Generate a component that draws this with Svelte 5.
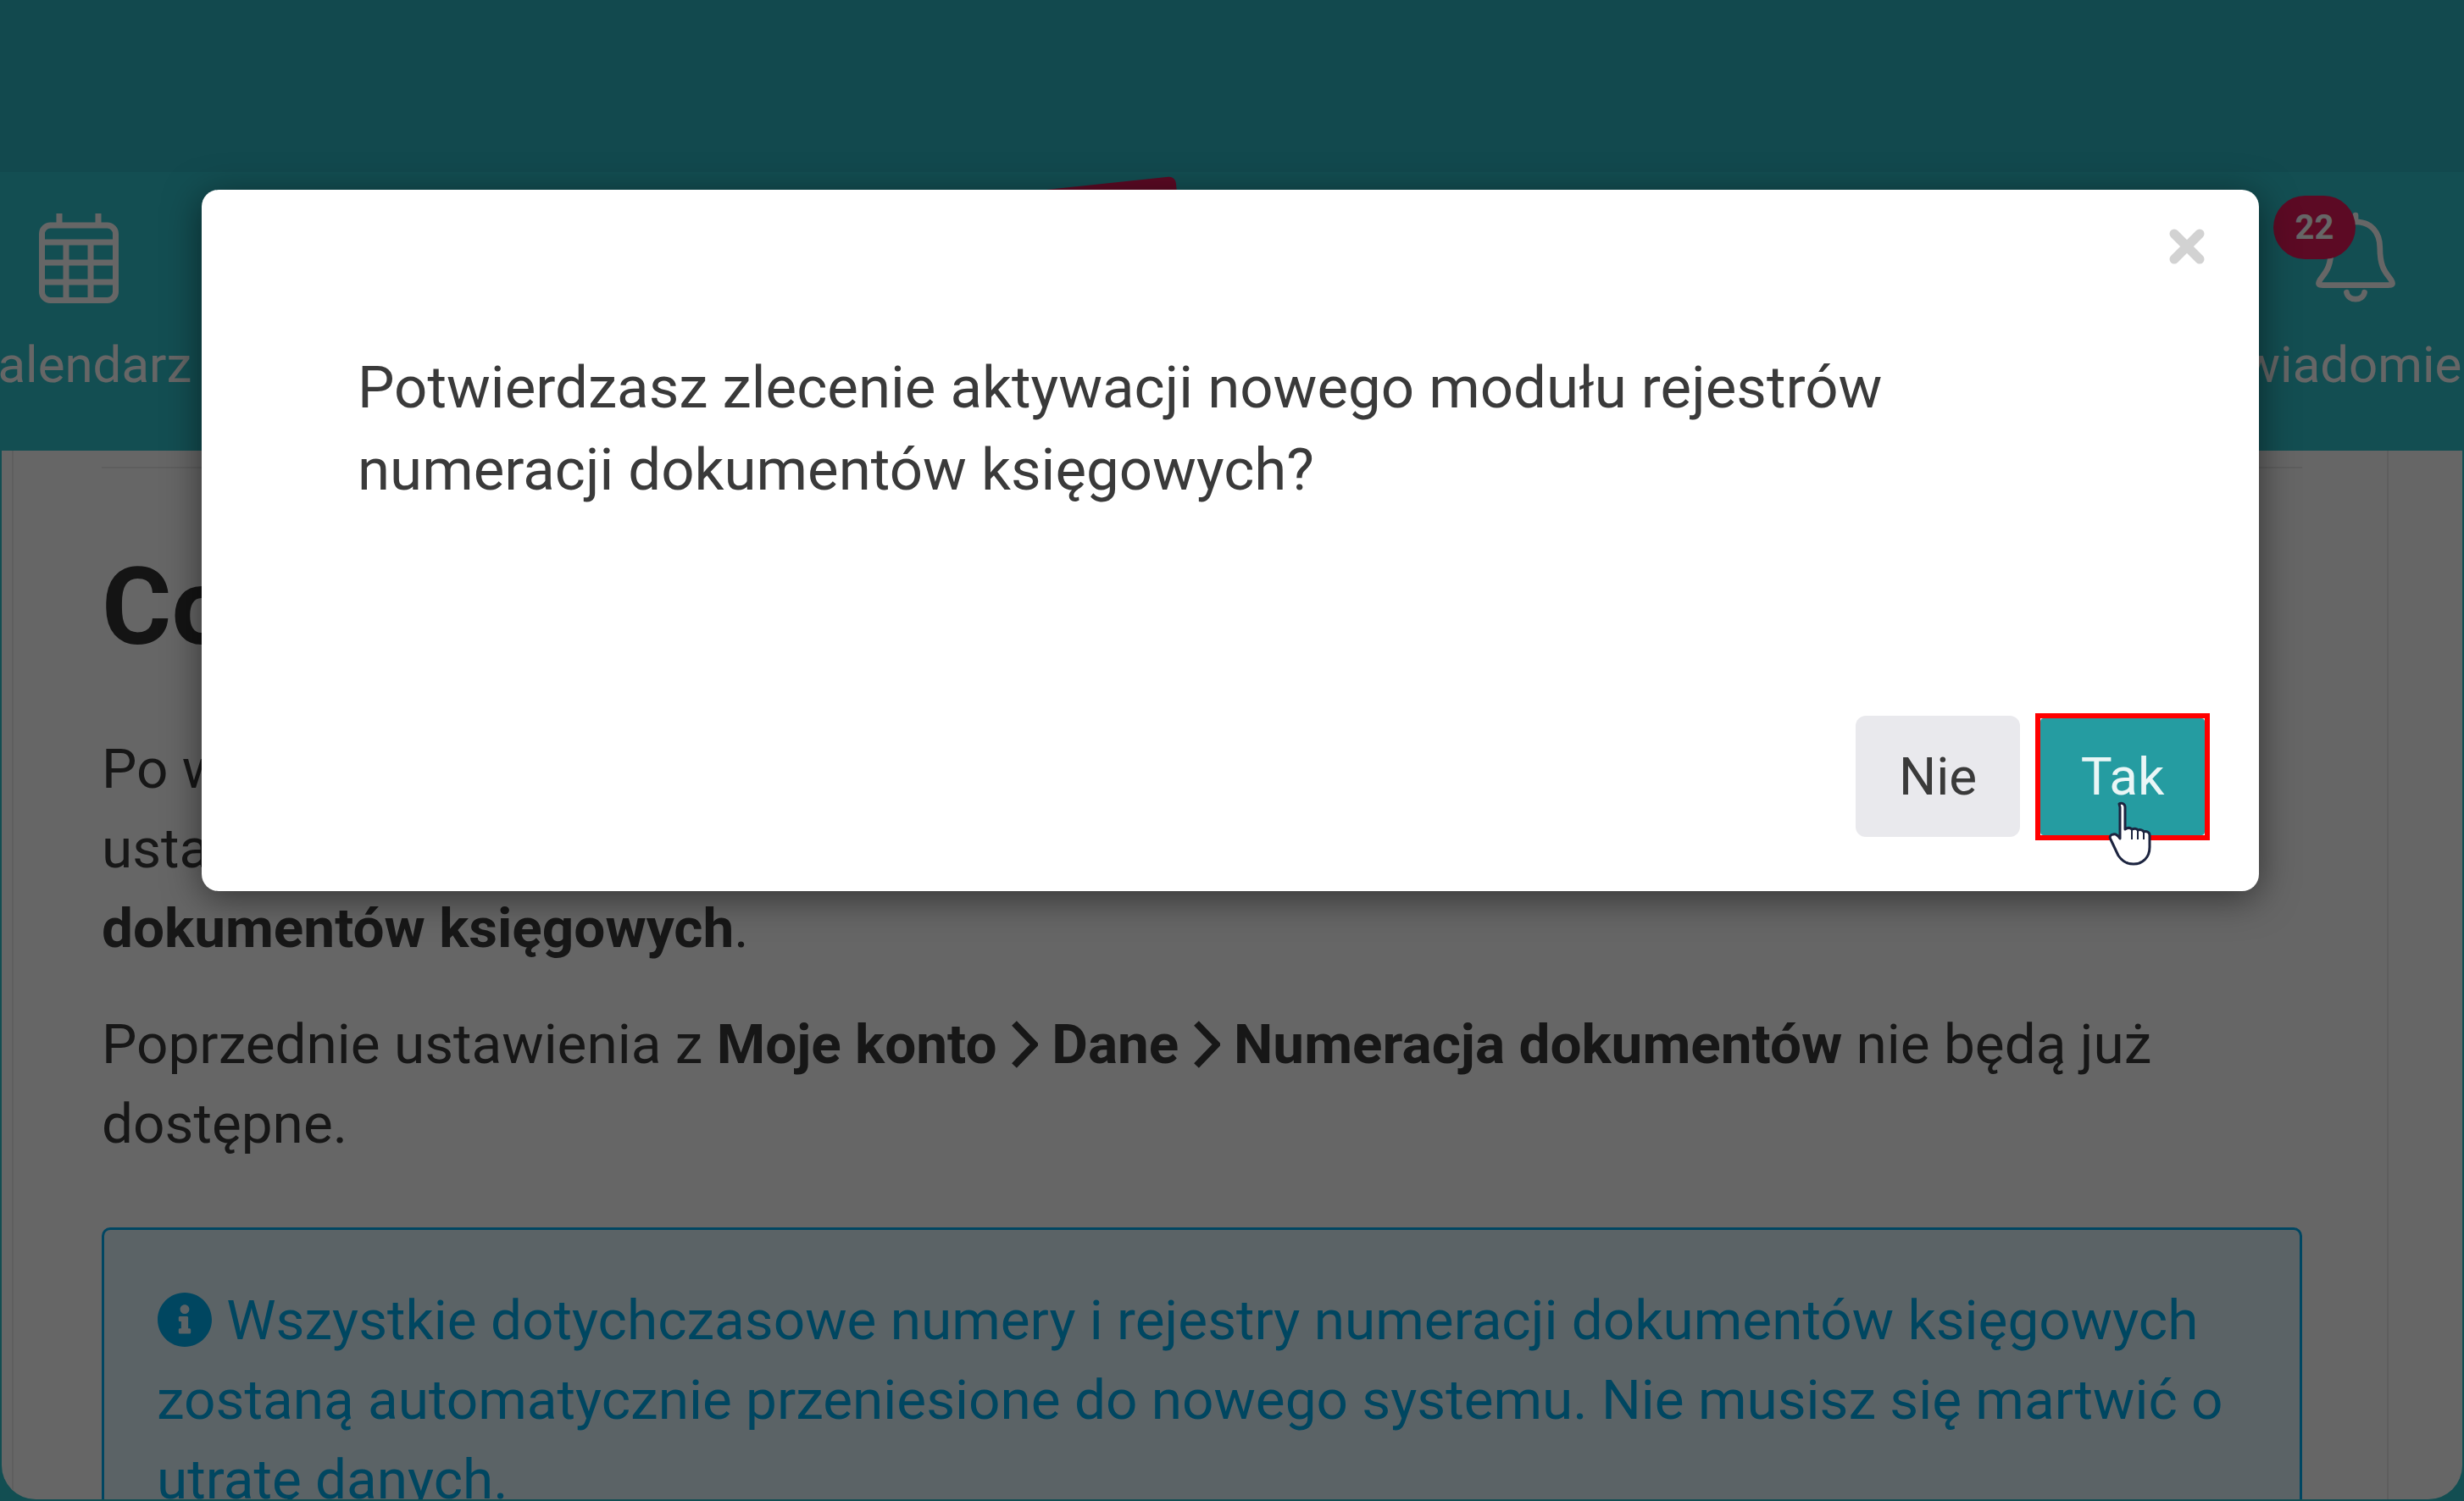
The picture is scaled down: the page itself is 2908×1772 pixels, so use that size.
<script>
	const confirmText = 'Potwierdzasz zlecenie aktywacji nowego modułu rejestrów numeracji dokumentów księgowych?';
	const infoPath =
		'M256 8C119.043 8 8 119.083 8 256c0 136.997 111.043 248 248 248s248-111.003 248-248C504 119.083 392.957 8 256 8zm0 110c23.196 0 42 18.804 42 42s-18.804 42-42 42-42-18.804-42-42 18.804-42 42-42zm56 254c0 6.627-5.373 12-12 12h-88c-6.627 0-12-5.373-12-12v-24c0-6.627 5.373-12 12-12h12v-64h-12c-6.627 0-12-5.373-12-12v-24c0-6.627 5.373-12 12-12h64c6.627 0 12 5.373 12 12v100h12c6.627 0 12 5.373 12 12v24z';
</script>

{#snippet chevron()}
	<svg class="chev" viewBox="0 0 32 56" fill="none" stroke="currentColor" stroke-width="8"><path d="M4 3l24 25L4 53" /></svg>
{/snippet}

<div class="page">
	<header class="topbar"></header>

	<nav class="nav">
		<a class="nav-item first" href="#kalendarz">
			<svg class="nav-icon" viewBox="0 0 94 108" fill="none" stroke="currentColor" stroke-width="7">
				<rect x="3.5" y="16" width="87" height="88.5" rx="10" />
				<path d="M24 2v14M70 2v14M3 36h88M3 60h88M3 83h88M32 38v67M61 38v67" />
			</svg>
			<span>Kalendarz</span>
		</a>

		<div class="ribbon"></div>

		<a class="nav-item last" href="#powiadomienia">
			<span class="bell-wrap">
				<svg class="nav-icon" viewBox="0 0 98 108" fill="none" stroke="currentColor" stroke-width="7" stroke-linecap="round">
					<path d="M49 2v8M49 10c-19 0-30 13-30 32 0 26-8 31-14 40-3 5-1 6 4 6h80c5 0 7-1 4-6-6-9-14-14-14-40 0-19-11-32-30-32z" />
					<path d="M38 97c2 11 20 11 22 0" />
				</svg>
				<span class="badge">22</span>
			</span>
			<span>Powiadomienia</span>
		</a>
	</nav>

	<main class="panel">
		<div class="sheet">
			<article class="article">
				<h1>Co się zmieni?</h1>
				<p>
					Po włączeniu nowego modułu numeracja będzie dostępna w osobnej<br />
					ustawień, gdzie znajdziesz wszystkie rejestry numeracji<br />
					<strong>dokumentów księgowych</strong>.
				</p>
				<p>
					Poprzednie ustawienia z <strong>Moje konto {@render chevron()} Dane {@render chevron()} Numeracja dokumentów</strong> nie będą już dostępne.
				</p>
				<div class="alert">
					<svg class="info" viewBox="0 0 512 512"><path d={infoPath} fill="currentColor" /></svg>
					Wszystkie dotychczasowe numery i rejestry numeracji dokumentów księgowych zostaną automatycznie przeniesione do nowego systemu. Nie musisz się martwić o utratę danych.
				</div>
			</article>
		</div>
	</main>

	<div class="overlay">
		<div class="modal" role="dialog" aria-modal="true">
			<button class="close" aria-label="Zamknij">
				<svg viewBox="0 0 42 42" fill="none" stroke="currentColor" stroke-width="11" stroke-linecap="round">
					<path d="M6 6l30 30M36 6L6 36" />
				</svg>
			</button>
			<p class="modal-text">{confirmText}</p>
			<div class="modal-footer">
				<button class="btn btn-no">Nie</button>
				<button class="btn btn-yes">
					Tak
					<span class="highlight"></span>
					<svg class="cursor" viewBox="0 0 58 76">
						<path
							d="M13 3c3-2 7 0 7 4v26c3-2 6-2 8 0 3-1 6-1 7 1 3-1 6 0 7 2 3-1 7 0 7 4v14c0 12-8 20-19 20-9 0-14-4-18-10L3 45c-2-3 0-6 3-6 3-1 6 2 8 5V7z"
							fill="#fff"
							stroke="#1d2540"
							stroke-width="3"
							stroke-linejoin="round"
						/>
						<path d="M28 33v12M35 35v10M42 37v8" stroke="#1d2540" stroke-width="2" fill="none" />
					</svg>
				</button>
			</div>
		</div>
	</div>
</div>

<style>
	:global(body) {
		margin: 0;
	}

	.page {
		position: relative;
		width: 2908px;
		height: 1772px;
		display: flex;
		flex-direction: column;
		overflow: hidden;
		background: #2fc3cd;
		font-family: Roboto, 'Liberation Sans', sans-serif;
		color: #3a3a3a;
	}

	.topbar {
		height: 203px;
		flex-shrink: 0;
		background: #2db7c3;
	}

	.nav {
		position: relative;
		height: 329px;
		flex-shrink: 0;
		display: flex;
		justify-content: space-between;
		background: #30c3cd;
	}

	.nav-item {
		width: 400px;
		flex-shrink: 0;
		padding-top: 47px;
		display: flex;
		flex-direction: column;
		align-items: center;
		gap: 37px;
		color: #fff;
		font-size: 60px;
		line-height: 72px;
		text-decoration: none;
		white-space: nowrap;
	}
	.nav-item.first {
		margin-left: -107px;
	}
	.nav-item.last {
		margin-right: -72px;
	}

	.nav-icon {
		display: block;
		width: 94px;
		height: 108px;
	}

	.bell-wrap {
		position: relative;
		display: block;
	}

	.badge {
		position: absolute;
		left: -50px;
		top: -19px;
		width: 97px;
		height: 75px;
		border-radius: 38px;
		background: #e6195a;
		display: flex;
		align-items: center;
		justify-content: center;
		font-size: 40px;
		font-weight: 700;
		line-height: 1;
	}

	.ribbon {
		position: absolute;
		left: 1197px;
		top: 5px;
		width: 190px;
		height: 70px;
		border-radius: 8px;
		background: #e6195a;
		transform: rotate(-6deg);
		transform-origin: top right;
	}

	.panel {
		flex: 1;
		min-height: 0;
		margin: 0 2px 2px;
		border-radius: 0 0 40px 40px;
		background: #fff;
		overflow: hidden;
		display: flex;
	}

	.sheet {
		flex: 1;
		margin: 0 87px 0 12px;
		padding: 0 100px 0 104px;
		border-left: 2px solid #ececec;
		border-right: 2px solid #ececec;
	}

	.article {
		margin-top: 19px;
		padding-top: 94px;
		border-top: 2px solid #ececec;
		font-size: 65.7px;
		line-height: 94px;
	}

	h1 {
		margin: 0 0 74px;
		font-size: 126px;
		line-height: 140px;
		font-weight: 700;
		color: #333;
	}

	p {
		margin: 0 0 43px;
	}

	.chev {
		display: inline-block;
		width: 32px;
		height: 56px;
		vertical-align: -6px;
	}

	.alert {
		margin-top: 75px;
		padding: 60px 62px;
		border: 3px solid #00b0f5;
		border-radius: 10px;
		background: #e4f7ff;
		color: #00aef0;
	}

	.info {
		display: inline-block;
		width: 66px;
		height: 66px;
		vertical-align: -10px;
	}

	.overlay {
		position: absolute;
		inset: 0;
		background: rgba(0, 0, 0, 0.6);
		display: flex;
		justify-content: center;
		align-items: flex-start;
	}

	.modal {
		position: relative;
		width: 2428px;
		height: 828px;
		margin: 224px 4px 0 0;
		box-sizing: border-box;
		padding: 185px 64px 64px 184px;
		display: flex;
		flex-direction: column;
		justify-content: space-between;
		background: #fff;
		border-radius: 20px;
		box-shadow: 0 8px 44px rgba(0, 0, 0, 0.5);
	}

	.close {
		position: absolute;
		top: 46px;
		right: 64px;
		width: 42px;
		height: 42px;
		padding: 0;
		border: 0;
		background: none;
		color: #d2d2d2;
	}
	.close svg {
		display: block;
	}

	.modal-text {
		margin: 0;
		max-width: 1900px;
		font-size: 69px;
		line-height: 97px;
		color: #3a3a3a;
	}

	.modal-footer {
		display: flex;
		justify-content: flex-end;
		align-items: center;
		gap: 24px;
	}

	.btn {
		position: relative;
		border: 0;
		font-family: inherit;
		font-size: 62px;
		padding: 0;
	}

	.btn-no {
		width: 194px;
		height: 143px;
		border-radius: 12px;
		background: #e9e9ed;
		color: #3a3a3a;
	}

	.btn-yes {
		width: 194px;
		height: 138px;
		border-radius: 4px;
		background: #259ca1;
		color: #eaf6f6;
	}

	.highlight {
		position: absolute;
		inset: -6px;
		border: 6px solid #f00;
	}

	.cursor {
		position: absolute;
		left: 80px;
		top: 98px;
		width: 58px;
		height: 76px;
	}
</style>
